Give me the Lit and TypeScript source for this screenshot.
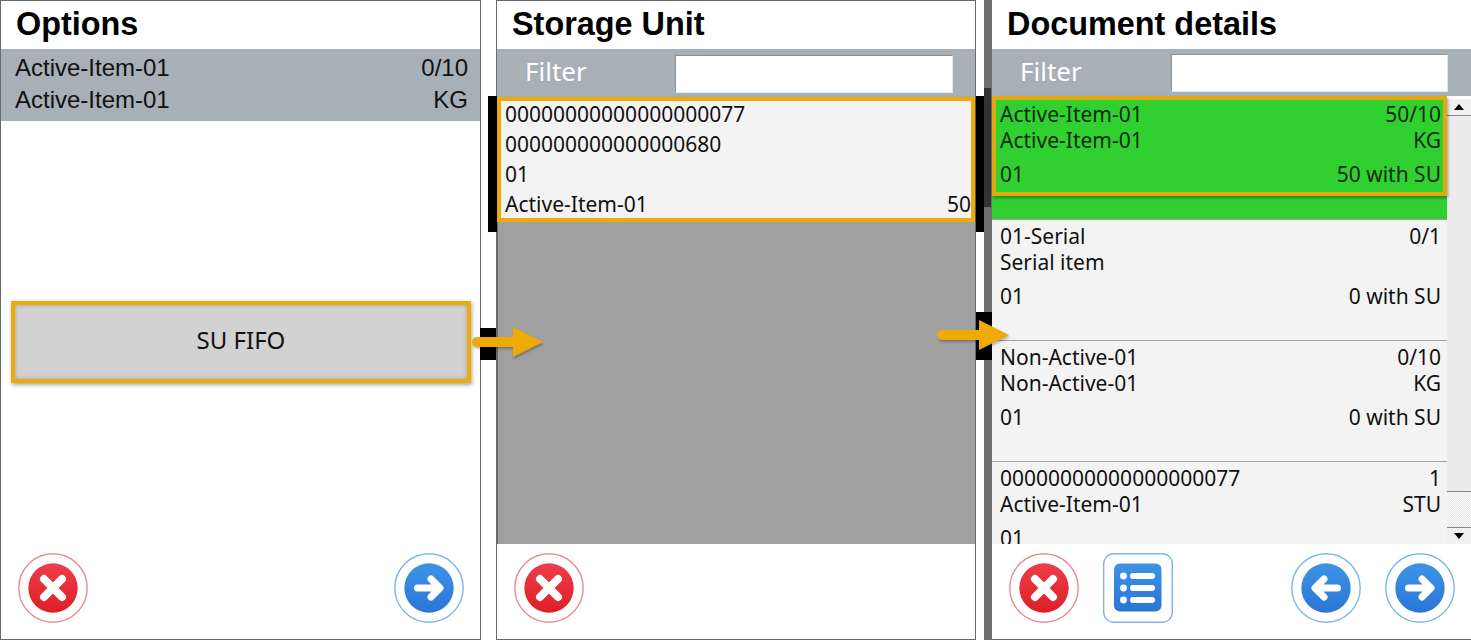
import { LitElement, html, css, svg } from 'lit'
import { customElement } from 'lit/decorators.js'

const defs = svg`
  <defs>
    <linearGradient id="red" x1="0" y1="0" x2="0" y2="1">
      <stop offset="0" stop-color="#ee3d4a" /><stop offset="1" stop-color="#dd1f26" />
    </linearGradient>
    <linearGradient id="blue" x1="0" y1="0" x2="0" y2="1">
      <stop offset="0" stop-color="#3d93e6" /><stop offset="1" stop-color="#2a76d6" />
    </linearGradient>
  </defs>
`

const closeIcon = html`<svg class="icon" viewBox="0 0 70 70">
  ${defs}
  <circle cx="35" cy="35" r="34.2" fill="#fff" stroke="#e88d92" stroke-width="1.4" />
  <circle cx="35" cy="35" r="24.7" fill="url(#red)" />
  <path d="M26 26L44 44M44 26L26 44" stroke="#fff" stroke-width="8" stroke-linecap="round" fill="none" />
</svg>`

const nextIcon = html`<svg class="icon" viewBox="0 0 70 70">
  ${defs}
  <circle cx="35" cy="35" r="34.2" fill="#fff" stroke="#7fb6ea" stroke-width="1.4" />
  <circle cx="35" cy="35" r="24.7" fill="url(#blue)" />
  <path d="M23.5 35H45M37 26L46 35L37 44" stroke="#fff" stroke-width="7" stroke-linecap="round" stroke-linejoin="round" fill="none" />
</svg>`

const prevIcon = html`<svg class="icon" viewBox="0 0 70 70">
  ${defs}
  <circle cx="35" cy="35" r="34.2" fill="#fff" stroke="#7fb6ea" stroke-width="1.4" />
  <circle cx="35" cy="35" r="24.7" fill="url(#blue)" />
  <path d="M46.5 35H25M33 26L24 35L33 44" stroke="#fff" stroke-width="7" stroke-linecap="round" stroke-linejoin="round" fill="none" />
</svg>`

const listIcon = html`<svg class="icon" viewBox="0 0 70 70">
  ${defs}
  <rect x="0.7" y="0.7" width="68.6" height="68.6" rx="10" fill="#fff" stroke="#7fb6ea" stroke-width="1.4" />
  <rect x="11" y="10.5" width="47.5" height="48" rx="6" fill="url(#blue)" />
  <circle cx="20.5" cy="23" r="3.4" fill="#fff" />
  <circle cx="20.5" cy="35" r="3.4" fill="#fff" />
  <circle cx="20.5" cy="47" r="3.4" fill="#fff" />
  <path d="M30 23H49M30 35H49M30 47H49" stroke="#fff" stroke-width="6" stroke-linecap="round" />
</svg>`

const arrow = (w: number) => svg`
  <path d="M5 15H${w - 29}" stroke="#eeab05" stroke-width="10" stroke-linecap="round" />
  <path d="M${w - 30} 0L${w} 15L${w - 30} 30Z" fill="#eeab05" />
`

@customElement('app-root')
export class AppRoot extends LitElement {
  static styles = css`
    :host {
      display: flex;
      position: relative;
      width: 1471px;
      height: 640px;
      background: #fff;
      overflow: hidden;
      font-family: 'Noto Sans', sans-serif;
      font-size: 21px;
      color: #111;
    }
    .panel {
      display: flex;
      flex-direction: column;
      box-sizing: border-box;
      height: 640px;
      background: #fff;
      border: 1px solid #6a6a6a;
    }
    .options { width: 481px; }
    .storage { width: 480px; margin-left: 15px; }
    .details {
      flex: 1;
      margin-left: 8px;
      border: none;
      border-left: 8px solid #6e6e6e;
      border-bottom: 1px solid #6a6a6a;
    }
    .title {
      height: 48px;
      flex: none;
      padding-left: 15px;
      font: bold 32.4px/46px 'Liberation Sans', sans-serif;
      color: #000;
      box-sizing: border-box;
    }
    .details .title { height: 49px; line-height: 48px; }
    .summary {
      background: #a7b0b7;
      padding: 3px 12px 5px 14px;
      font: 24px/32px 'Liberation Sans', sans-serif;
      color: #111;
    }
    .line {
      display: flex;
      justify-content: space-between;
    }
    .body {
      flex: 1;
      min-height: 0;
      display: flex;
      flex-direction: column;
    }
    .options .body { padding: 180px 9px 0 10px; }
    .su-fifo {
      height: 82px;
      box-sizing: border-box;
      padding-bottom: 6px;
      display: flex;
      align-items: center;
      justify-content: center;
      background: #d2d2d2;
      border: 4px solid #eeab05;
      box-shadow: 1px 2px 4px rgba(0, 0, 0, 0.35), inset 0 0 4px rgba(0, 0, 0, 0.25);
      font-size: 24px;
    }
    .filter {
      height: 47px;
      flex: none;
      box-sizing: border-box;
      background: #a7b0b7;
      display: flex;
      align-items: center;
      padding-left: 28px;
      color: #fff;
      font-size: 26px;
    }
    .filter span { width: 150px; margin-top: -4px; }
    .filter i {
      display: block;
      width: 278px;
      height: 38px;
      box-sizing: border-box;
      background: #fff;
      border: 1px solid #8b9399;
      border-bottom-color: #e8e8e8;
      border-right-color: #e8e8e8;
    }
    .storage .filter { height: 48px; padding-bottom: 1px; }
    .storage .filter i { margin-top: 3px; }
    .details .filter span { width: 151px; }
    .details .filter i { width: 277px; }
    .gray-area {
      flex: 1;
      background: #a0a0a0;
      box-shadow: inset 1px 0 0 #6a6a6a;
    }
    .su-card {
      box-sizing: border-box;
      height: 125px;
      background: #f3f3f3;
      border: 4px solid #eeab05;
      padding-left: 4px;
      line-height: 30px;
      box-shadow: 1px 2px 3px rgba(0, 0, 0, 0.3);
    }
    .su-card .line:first-child { margin-top: -2px; }
    .footer {
      height: 95px;
      flex: none;
      box-sizing: border-box;
      display: flex;
      align-items: center;
      padding: 0 15px 7px 17px;
    }
    .icon { width: 70px; height: 70px; flex: none; display: block; }
    .grow { flex: 1; }
    .footer .list { margin-left: 24px; }
    .footer .spaced { margin-left: 24px; }
    .options .footer { padding-right: 16px; }
    .details .footer { padding-left: 17px; padding-right: 16px; }
    .split {
      flex: 1;
      min-height: 0;
      display: flex;
      overflow: hidden;
    }
    .rows {
      flex: 1;
      min-width: 0;
      overflow: hidden;
      background: #f3f3f3;
    }
    .row {
      box-sizing: border-box;
      height: 121px;
      padding: 3px 6px 0 8px;
      border-top: 1px solid #a2a2a2;
      line-height: 26px;
    }
    .row:first-child { border-top: none; }
    .row .line:nth-child(3) { margin-top: 8px; }
    .row.active {
      height: 123px;
      background: #31d031;
      padding-top: 5px;
      color: #0c2a0c;
    }
    .frame {
      position: absolute;
      left: 992px;
      top: 96px;
      width: 455px;
      height: 100px;
      box-sizing: border-box;
      border: 4px solid #e2a90f;
      box-shadow: 1px 2px 3px rgba(0, 0, 0, 0.35);
      pointer-events: none;
    }
    .scroll {
      width: 24px;
      flex: none;
      display: flex;
      flex-direction: column;
      background: #f5f5f5;
    }
    .scroll-top { height: 3px; background: #fff; }
    .scroll-btn {
      height: 16px;
      flex: none;
      background: #f0f0f0;
      display: flex;
      align-items: center;
      justify-content: center;
      border-bottom: 1px solid #888;
    }
    .scroll-btn.down { border-bottom: none; border-top: 1px solid #888; }
    .scroll-btn svg { display: block; }
    .thumb {
      height: 375px;
      flex: none;
      background: #ececec;
      border-bottom: 1px solid #888;
    }
    .track {
      flex: 1;
      background: repeating-conic-gradient(#fafafa 0 25%, #e8e8e8 0 50%) 0 0 / 2px 2px;
    }
    .mark {
      position: absolute;
      background: #000;
    }
    .mark-a { left: 488px; top: 96px; width: 9px; height: 136px; }
    .mark-b { left: 480px; top: 328px; width: 16px; height: 32px; }
    .mark-c { left: 976px; top: 96px; width: 8px; height: 136px; }
    .mark-d { left: 976px; top: 312px; width: 16px; height: 48px; }
    .mark-e { left: 984px; top: 88px; width: 7px; height: 119px; background: #333; }
    .flow {
      position: absolute;
      overflow: visible;
      filter: drop-shadow(1px 2px 1px rgba(0, 0, 0, 0.25));
    }
    .flow-a { left: 472px; top: 327px; }
    .flow-b { left: 937px; top: 320px; }
  `

  render() {
    return html`
      <section class="panel options">
        <div class="title">Options</div>
        <div class="summary">
          <div class="line"><span>Active-Item-01</span><span>0/10</span></div>
          <div class="line"><span>Active-Item-01</span><span>KG</span></div>
        </div>
        <div class="body"><div class="su-fifo">SU FIFO</div></div>
        <div class="footer">${closeIcon}<div class="grow"></div>${nextIcon}</div>
      </section>

      <section class="panel storage">
        <div class="title">Storage Unit</div>
        <div class="filter"><span>Filter</span><i></i></div>
        <div class="body">
          <div class="su-card">
            <div class="line"><span>00000000000000000077</span></div>
            <div class="line"><span>000000000000000680</span></div>
            <div class="line"><span>01</span></div>
            <div class="line"><span>Active-Item-01</span><span>50</span></div>
          </div>
          <div class="gray-area"></div>
        </div>
        <div class="footer">${closeIcon}</div>
      </section>

      <section class="panel details">
        <div class="title">Document details</div>
        <div class="filter"><span>Filter</span><i></i></div>
        <div class="split">
          <div class="rows">
            <div class="row active">
              <div class="line"><span>Active-Item-01</span><span>50/10</span></div>
              <div class="line"><span>Active-Item-01</span><span>KG</span></div>
              <div class="line"><span>01</span><span>50 with SU</span></div>
            </div>
            <div class="row">
              <div class="line"><span>01-Serial</span><span>0/1</span></div>
              <div class="line"><span>Serial item</span></div>
              <div class="line"><span>01</span><span>0 with SU</span></div>
            </div>
            <div class="row">
              <div class="line"><span>Non-Active-01</span><span>0/10</span></div>
              <div class="line"><span>Non-Active-01</span><span>KG</span></div>
              <div class="line"><span>01</span><span>0 with SU</span></div>
            </div>
            <div class="row">
              <div class="line"><span>00000000000000000077</span><span>1</span></div>
              <div class="line"><span>Active-Item-01</span><span>STU</span></div>
              <div class="line"><span>01</span></div>
            </div>
          </div>
          <div class="scroll">
            <div class="scroll-top"></div>
            <div class="scroll-btn">
              <svg width="10" height="6" viewBox="0 0 10 6"><path d="M5 0L10 6H0Z" fill="#000" /></svg>
            </div>
            <div class="thumb"></div>
            <div class="track"></div>
            <div class="scroll-btn down">
              <svg width="10" height="6" viewBox="0 0 10 6"><path d="M0 0H10L5 6Z" fill="#000" /></svg>
            </div>
          </div>
        </div>
        <div class="footer">
          ${closeIcon}
          <div class="list">${listIcon}</div>
          <div class="grow"></div>
          ${prevIcon}
          <div class="spaced">${nextIcon}</div>
        </div>
      </section>

      <div class="mark mark-a"></div>
      <div class="mark mark-b"></div>
      <div class="mark mark-c"></div>
      <div class="mark mark-d"></div>
      <div class="mark mark-e"></div>
      <div class="frame"></div>
      <svg class="flow flow-a" width="71" height="30">${arrow(71)}</svg>
      <svg class="flow flow-b" width="72" height="30">${arrow(72)}</svg>
    `
  }
}
